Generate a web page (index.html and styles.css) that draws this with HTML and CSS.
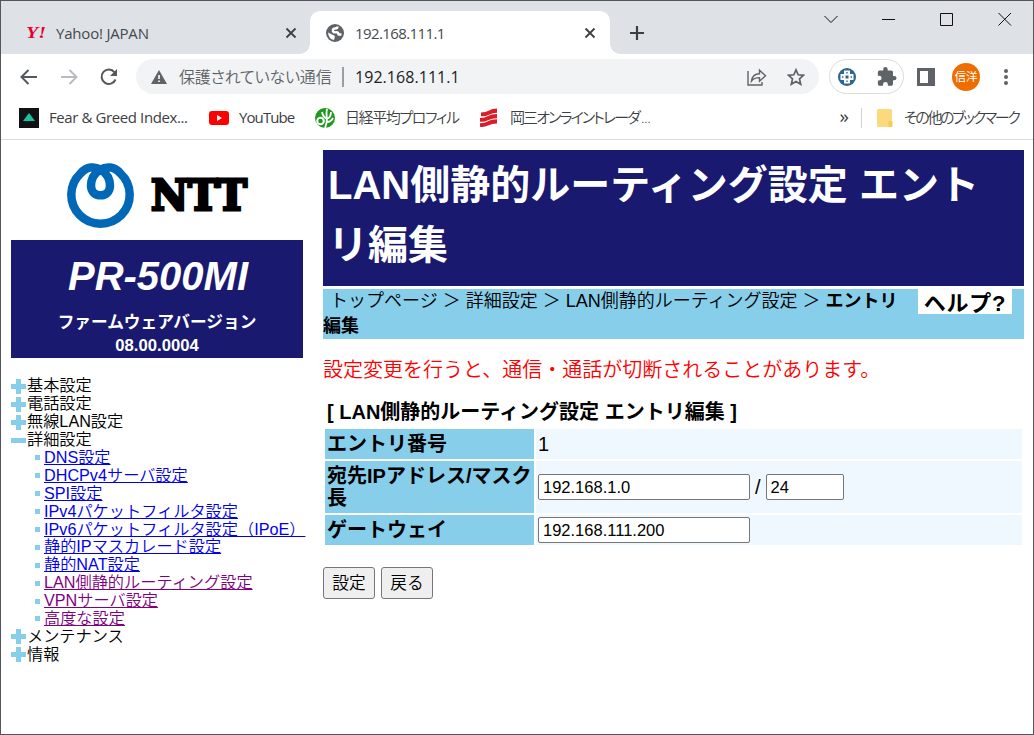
FILE: index.html
```
<!DOCTYPE html>
<html lang="ja">
<head>
  <meta charset="UTF-8">
  <title>192.168.111.1</title>
  <link rel="stylesheet" href="styles.css">
</head>
<body>
  <div class="window">
    <div class="tabstrip">
      <div class="tab">
        <svg class="yahoo" width="22" height="16" viewBox="0 0 22 16"><text x="0" y="13" textLength="20" lengthAdjust="spacingAndGlyphs">Y!</text></svg>
        <span class="tab-title">Yahoo! JAPAN</span>
        <svg class="close" width="12" height="12" viewBox="0 0 12 12"><path d="M1.5 1.5l9 9M10.5 1.5l-9 9"/></svg>
      </div>
      <div class="tab active">
        <svg class="globe" width="18" height="18" viewBox="0 0 18 18"><circle cx="9" cy="9" r="9" fill="#5f6368"/><path fill="none" stroke="#fff" stroke-width="2.4" stroke-linejoin="round" d="M11.5 2.5Q11.5 4.5 9 4.5T7 7.2Q7.5 8.5 10 8.3T12.5 10.5H15.5"/><path fill="#fff" d="M2 8.5l4.5 2.2q2.5.3 2.3 2T8 16Q2.5 15 2 8.5z"/></svg>
        <span class="tab-title">192.168.111.1</span>
        <svg class="close" width="12" height="12" viewBox="0 0 12 12"><path d="M1.5 1.5l9 9M10.5 1.5l-9 9"/></svg>
      </div>
      <svg class="new-tab" width="16" height="16" viewBox="0 0 16 16"><path d="M8 1v14M1 8h14"/></svg>
      <div class="window-buttons">
        <svg width="14" height="14" viewBox="0 0 14 14"><path d="M.5 4l6.5 6.5L13.5 4"/></svg>
        <svg width="14" height="14" viewBox="0 0 14 14"><path d="M0 7.5h13"/></svg>
        <svg width="14" height="14" viewBox="0 0 14 14"><path d="M.5 1.5h12v12H.5z"/></svg>
        <svg width="14" height="14" viewBox="0 0 14 14"><path d="M.5 1l12.5 12.5M13 1L.5 13.5"/></svg>
      </div>
    </div>

    <div class="toolbar">
      <svg class="nav" width="18" height="16" viewBox="0 0 18 16"><path d="M17 8H2M8.5 1L1.5 8l7 7"/></svg>
      <svg class="nav disabled" width="18" height="16" viewBox="0 0 18 16"><path d="M1 8h15M9.5 1l7 7-7 7"/></svg>
      <svg class="nav" width="18" height="18" viewBox="0 0 18 18"><path d="M15.5 11.5A7.2 7.2 0 1 1 14.5 4.3"/><path class="solid" d="M17 1v7h-7z"/></svg>
      <div class="omnibox">
        <svg width="16" height="14" viewBox="0 0 16 14"><path fill="#5f6368" d="M8 0l8 14H0z"/><path stroke="#fff" stroke-width="1.6" d="M8 5v4M8 10.5v1.6"/></svg>
        <span class="insecure">保護されていない通信</span>
        <span class="omni-divider"></span>
        <span class="url">192.168.111.1</span>
        <svg class="share" width="20" height="18" viewBox="0 0 20 18"><path d="M1 3v14h14v-3M4.5 13c.6-4.5 3.3-7 8-7.200V2.200l6 5.600-6 5.400V9.600c-3.800 0-6.200 1-8 3.400z"/></svg>
        <svg class="star" width="18" height="18" viewBox="0 0 18 18"><path d="M9 1.800l2.200 5 5.300.5-4 3.600 1.200 5.300L9 13.400l-4.700 2.800 1.200-5.300-4-3.600 5.300-.5z"/></svg>
      </div>
      <div class="extensions">
        <svg width="18" height="18" viewBox="0 0 18 18"><circle cx="9" cy="9" r="9" fill="#2b6592"/><path fill="#fff" d="M6 2.500h6V6h3.500v6H12v3.500H6V12H2.500V6H6z"/><path fill="#2b6592" d="M7.800 4.200h2.400L9 6zM4.200 7.800v2.400L6 9zM13.800 7.800v2.400L12 9zM7.800 13.800h2.400L9 12zM7.500 7.500h3v3h-3z"/></svg>
        <svg width="20" height="20" viewBox="1 1 22.5 22.5"><path fill="#5f6368" d="M20.5 11H19V7c0-1.100-.9-2-2-2h-4V3.500a2.500 2.500 0 0 0-5 0V5H4c-1.100 0-2 .9-2 2v3.800h1.500a2.700 2.700 0 0 1 0 5.400H2V20c0 1.100.9 2 2 2h3.800v-1.500a2.700 2.700 0 0 1 5.400 0V22H17c1.100 0 2-.9 2-2v-4h1.500a2.500 2.500 0 0 0 0-5z"/></svg>
      </div>
      <svg class="sidepanel" width="18" height="18" viewBox="0 0 18 18"><path fill="#5f6368" fill-rule="evenodd" d="M0 0h18v18H0zM3 3v12h8V3z"/></svg>
      <span class="avatar">信洋</span>
      <span class="menu"><i></i><i></i><i></i></span>
    </div>

    <div class="bookmarks">
      <svg width="20" height="20" viewBox="0 0 20 20"><path fill="#101214" d="M0 0h20v20H0z"/><path fill="#17c3a0" d="M10 5l6 8H4z"/></svg>
      <span class="bm bm-fear">Fear &amp; Greed Index...</span>
      <svg width="20" height="14" viewBox="0 0 20 14"><rect width="20" height="14" rx="3" fill="#f00"/><path fill="#fff" d="M8 4l5 3-5 3z"/></svg>
      <span class="bm bm-youtube">YouTube</span>
      <svg width="20" height="20" viewBox="0 0 20 20"><circle cx="10" cy="10" r="10" fill="#1d9a1d"/><circle cx="5.500" cy="13" r="3.300" fill="none" stroke="#fff" stroke-width="2"/><path fill="none" stroke="#fff" stroke-width="1.800" d="M10 20q2-5 2-10M12 11q-4-2-5-7M12 10q-1-4 0-9M12 11q4-2 4-7M12 14q4 0 6-4"/></svg>
      <span class="bm bm-nikkei">日経平均プロフィル</span>
      <svg width="18" height="19" viewBox="0 0 18 19"><path fill="#d71f2b" d="M1 4.500q5 0 8-2T17 .500v4.200q-4 0-8 2T1 8.200zM0 10q5 0 8-2t9-2v4.200q-5 0-9 2t-8 1.500zM0 15.300q5 0 8-2t9-2v4.200q-5 0-9 2t-8 1.300z"/></svg>
      <span class="bm bm-okasan">岡三オンライントレーダ<span class="dots">...</span></span>
      <span class="more">»</span>
      <span class="bm-divider"></span>
      <svg width="16" height="18" viewBox="0 0 16 18"><rect width="15" height="18" rx="1.500" fill="#fbd97c"/><rect x="11.500" y="12" width="4" height="6" rx="1" fill="#f6cb58"/></svg>
      <span class="bm bm-other">その他のブックマーク</span>
    </div>

    <div class="page">
      <div class="sidebar">
        <div class="logo">
          <svg width="200" height="80" viewBox="0 0 200 80">
            <path fill="none" stroke="#0068b7" stroke-width="8.5" d="M40.5 14.500C46 11.500 54 11 60.500 18.500A29.200 29 0 1 1 20.500 18.500C27 11 35 11.500 40.500 14.500C46 18 50 24 50 30.500C50 36.500 46 40.300 40.500 40.300C35 40.300 31 36.500 31 30.500C31 24 35 18 40.500 14.500z"/>
            <text class="ntt" x="91" y="55" textLength="96" lengthAdjust="spacingAndGlyphs">NTT</text>
          </svg>
        </div>
        <div class="product">
          <div class="model">PR-500MI</div>
          <div class="firmware">ファームウェアバージョン<br>08.00.0004</div>
        </div>
        <ul class="menu-list">
          <li class="plus">基本設定</li>
          <li class="plus">電話設定</li>
          <li class="plus">無線LAN設定</li>
          <li class="minus">詳細設定</li>
          <li class="sub"><a href="#">DNS設定</a></li>
          <li class="sub"><a href="#">DHCPv4サーバ設定</a></li>
          <li class="sub"><a href="#">SPI設定</a></li>
          <li class="sub"><a href="#">IPv4パケットフィルタ設定</a></li>
          <li class="sub"><a href="#">IPv6パケットフィルタ設定（IPoE）</a></li>
          <li class="sub"><a href="#">静的IPマスカレード設定</a></li>
          <li class="sub"><a href="#">静的NAT設定</a></li>
          <li class="sub"><a class="visited" href="#">LAN側静的ルーティング設定</a></li>
          <li class="sub"><a class="visited" href="#">VPNサーバ設定</a></li>
          <li class="sub"><a class="visited" href="#">高度な設定</a></li>
          <li class="plus">メンテナンス</li>
          <li class="plus">情報</li>
        </ul>
      </div>

      <div class="main">
        <h1>LAN側静的ルーティング設定 エントリ編集</h1>
        <div class="crumbs">
          <div class="path">&nbsp;トップページ ＞ 詳細設定 ＞ LAN側静的ルーティング設定 ＞ <b>エントリ編集</b></div>
          <div class="help">ヘルプ?</div>
        </div>
        <p class="warning">設定変更を行うと、通信・通話が切断されることがあります。</p>
        <table>
          <caption>[ LAN側静的ルーティング設定 エントリ編集 ]</caption>
          <tr>
            <th>エントリ番号</th>
            <td>1</td>
          </tr>
          <tr class="tall">
            <th>宛先IPアドレス/マスク長</th>
            <td><div class="fields"><input class="ip" type="text" value="192.168.1.0"><span>/</span><input class="mask" type="text" value="24"></div></td>
          </tr>
          <tr>
            <th>ゲートウェイ</th>
            <td><div class="fields"><input class="ip" type="text" value="192.168.111.200"></div></td>
          </tr>
        </table>
        <div class="buttons">
          <button>設定</button>
          <button>戻る</button>
        </div>
      </div>
    </div>
  </div>
</body>
</html>
```
FILE: styles.css
```
* {
  box-sizing: border-box;
}
body {
  margin: 0;
  font-family: "Liberation Sans", "Noto Sans CJK JP", sans-serif;
  color: #000;
}
svg {
  display: block;
  flex: none;
}
.window {
  width: 1034px;
  height: 735px;
  border: 1px solid #55565c;
  background: #fff;
  overflow: hidden;
}

/* tabs */
.tabstrip {
  display: flex;
  height: 53px;
  padding-top: 10px;
  background: #dee1e6;
  font-family: "Open Sans", "Noto Sans CJK JP", sans-serif;
  font-size: 15px;
  color: #45494d;
}
.tab {
  display: flex;
  align-items: center;
  width: 309px;
  height: 43px;
  padding: 0 13px 0 25px;
}
.tab.active {
  position: relative;
  width: 300px;
  padding: 0 14px 0 16px;
  border-radius: 10px 10px 0 0;
  background: #fff;
}
.tab.active::before,
.tab.active::after {
  content: "";
  position: absolute;
  bottom: 0;
  width: 10px;
  height: 10px;
}
.tab.active::before {
  left: -10px;
  background: radial-gradient(circle at 0 0, #dee1e6 9.5px, #fff 10px);
}
.tab.active::after {
  right: -10px;
  background: radial-gradient(circle at 100% 0, #dee1e6 9.5px, #fff 10px);
}
.yahoo {
  margin-right: 8px;
  font: italic bold 16px "Liberation Serif", serif;
  fill: #e6002d;
}
.globe {
  margin-right: 11px;
}
.tab-title {
  letter-spacing: -0.2px;
  white-space: nowrap;
}
.active .tab-title {
  letter-spacing: -0.6px;
}
.close {
  margin-left: auto;
  fill: none;
  stroke: #3c4043;
  stroke-width: 1.8;
}
.new-tab {
  margin: 14px 0 0 19px;
  fill: none;
  stroke: #3c4043;
  stroke-width: 2.2;
}
.window-buttons {
  display: flex;
  gap: 44px;
  margin: 1px 21px 0 auto;
  fill: none;
  stroke: #111;
}

/* toolbar */
.toolbar {
  display: flex;
  align-items: center;
  height: 45px;
  padding-left: 19px;
  font-family: "Open Sans", "Noto Sans CJK JP", sans-serif;
}
.nav {
  margin-right: 22px;
  fill: none;
  stroke: #55585c;
  stroke-width: 2;
}
.nav.disabled {
  stroke: #b9bbbe;
}
.nav .solid {
  fill: #55585c;
  stroke: none;
}
.omnibox {
  display: flex;
  align-items: center;
  width: 683px;
  height: 35px;
  margin-left: -4px;
  padding: 0 14px 0 15px;
  border-radius: 18px;
  background: #f1f3f4;
}
.insecure {
  width: 152px;
  margin-left: 12px;
  padding-bottom: 2px;
  font-size: 16px;
  font-weight: 350;
  font-feature-settings: "palt";
  letter-spacing: -0.2px;
  color: #5f6368;
  white-space: nowrap;
}
.omni-divider {
  width: 2px;
  height: 20px;
  margin: 0 11px;
  background: #9a9da1;
}
.url {
  font-size: 16px;
  letter-spacing: 0.05px;
  color: #202124;
}
.share {
  margin-left: auto;
  fill: none;
  stroke: #5f6368;
  stroke-width: 1.4;
}
.star {
  margin-left: 20px;
  fill: none;
  stroke: #5f6368;
  stroke-width: 1.7;
}
.extensions {
  display: flex;
  align-items: center;
  justify-content: space-between;
  width: 75px;
  height: 35px;
  margin-left: 10px;
  padding: 0 6px 0 8px;
  border: 1px solid #dadce0;
  border-radius: 18px;
}
.sidepanel {
  margin-left: 13px;
}
.avatar {
  width: 28px;
  height: 28px;
  margin-left: 17px;
  border-radius: 50%;
  background: #ef6c00;
  color: #fff;
  font-size: 11.5px;
  line-height: 28px;
  text-align: center;
}
.menu {
  display: flex;
  flex-direction: column;
  gap: 2px;
  margin-left: 24px;
}
.menu i {
  width: 4px;
  height: 4px;
  border-radius: 50%;
  background: #5f6368;
}

/* bookmarks */
.bookmarks {
  display: flex;
  align-items: center;
  height: 41px;
  padding: 0 12px 3px 18px;
  border-bottom: 1px solid #dadce0;
  font-family: "Open Sans", "Noto Sans CJK JP", sans-serif;
  font-size: 15px;
  color: #3c4043;
}
.bm {
  flex: none;
  margin-left: 10px;
  padding-bottom: 2px;
  white-space: nowrap;
  font-feature-settings: "palt";
}
.bm-fear {
  width: 160px;
  letter-spacing: -0.4px;
}
.bm-youtube {
  width: 76px;
  letter-spacing: -0.9px;
}
.bm-nikkei {
  width: 135px;
  font-weight: 350;
  letter-spacing: -1.4px;
}
.bm-okasan {
  margin-left: 12px;
  font-weight: 350;
  letter-spacing: -1.9px;
}
.dots {
  margin-left: 2px;
  letter-spacing: -0.5px;
}
.more {
  margin-left: auto;
  padding-bottom: 4px;
  font-size: 19px;
  line-height: 20px;
}
.bm-divider {
  width: 1px;
  height: 20px;
  margin: 0 15px 0 12px;
  background: #cfd1d4;
}
.bm-other {
  width: 117px;
  margin-left: 11px;
  font-weight: 350;
  letter-spacing: -2.3px;
}

/* page */
.page {
  display: flex;
  padding: 10px 9px 0 10px;
}
.sidebar {
  width: 292px;
  margin-right: 20px;
}
.logo {
  height: 90px;
  padding: 5px 0 0 49px;
}
.ntt {
  font: bold 43px "DejaVu Serif", serif;
  stroke: #000;
  stroke-width: 3;
}
.product {
  height: 118px;
  padding-top: 12px;
  background: #191970;
  color: #fff;
  font-weight: bold;
  text-align: center;
}
.model {
  padding-left: 2px;
  font-size: 40px;
  font-style: italic;
  line-height: 48px;
}
.firmware {
  padding-top: 11px;
  font-size: 16.7px;
  line-height: 23px;
}
.menu-list {
  margin: 19.4px 0 0;
  padding: 0;
  list-style: none;
  font-size: 16.2px;
  font-weight: 350;
}
.menu-list li {
  display: flex;
  align-items: center;
  height: 17.9px;
  line-height: 17.9px;
  white-space: nowrap;
}
.menu-list li::before {
  content: "";
  flex: none;
  width: 15px;
  height: 15px;
  margin-right: 1px;
}
.menu-list .plus::before {
  background:
    linear-gradient(#87ceeb, #87ceeb) center / 5px 15px no-repeat,
    linear-gradient(#87ceeb, #87ceeb) center / 15px 5px no-repeat;
}
.menu-list .minus::before {
  background: linear-gradient(#87ceeb, #87ceeb) center / 15px 5px no-repeat;
}
.menu-list .sub {
  padding-left: 24px;
}
.menu-list .sub::before {
  width: 5px;
  height: 5px;
  margin-right: 4px;
  background: #87ceeb;
}
a {
  color: #0000ee;
}
a.visited {
  color: #800080;
}

.main {
  width: 701px;
}
h1 {
  height: 136px;
  margin: 0 0 3px;
  padding: 5px 30px 5px 5px;
  background: #191970;
  color: #fff;
  font-size: 40px;
  line-height: 60px;
  word-break: break-all;
}
.crumbs {
  display: flex;
  justify-content: space-between;
  height: 50px;
  padding-right: 12px;
  background: #87ceeb;
  font-size: 18px;
  font-weight: 350;
  line-height: 24.5px;
}
.path {
  width: 586px;
  height: 50px;
  text-indent: 2px;
}
.path b {
  font-weight: 700;
}
.help {
  width: 94px;
  height: 25px;
  padding-top: 1px;
  background: #fff;
  font-size: 22px;
  font-weight: bold;
  letter-spacing: 0.8px;
  line-height: 27px;
  text-align: center;
}
.warning {
  margin: 19px 0 16px;
  color: #f00;
  font-size: 20px;
  font-weight: 350;
  line-height: 24px;
}
table {
  width: 701px;
  border-spacing: 2px;
  font-size: 20px;
  table-layout: fixed;
}
caption {
  padding: 0 0 1px 4px;
  font-weight: bold;
  line-height: 28px;
  text-align: left;
}
th, td {
  height: 30px;
  padding: 0 2px;
  line-height: 22px;
  text-align: left;
}
th {
  width: 209px;
  background: #87ceeb;
}
td {
  background: #f0f8ff;
}
.tall th, .tall td {
  height: 52px;
}
.fields {
  display: flex;
  align-items: center;
  gap: 5px;
}
input {
  height: 26px;
  margin: 0;
  padding: 1px 4px;
  border: 1px solid #767676;
  border-radius: 2px;
  background: #fff;
  font: 16.5px "Liberation Sans", sans-serif;
}
.ip {
  width: 212px;
}
.mask {
  width: 78px;
}
.buttons {
  display: flex;
  gap: 6px;
  margin-top: 20px;
}
button {
  width: 52px;
  height: 32px;
  padding: 0 0 2px;
  border: 1px solid #767676;
  border-radius: 3px;
  background: #efefef;
  font: 350 16.7px "Liberation Sans", "Noto Sans CJK JP", sans-serif;
}
```
